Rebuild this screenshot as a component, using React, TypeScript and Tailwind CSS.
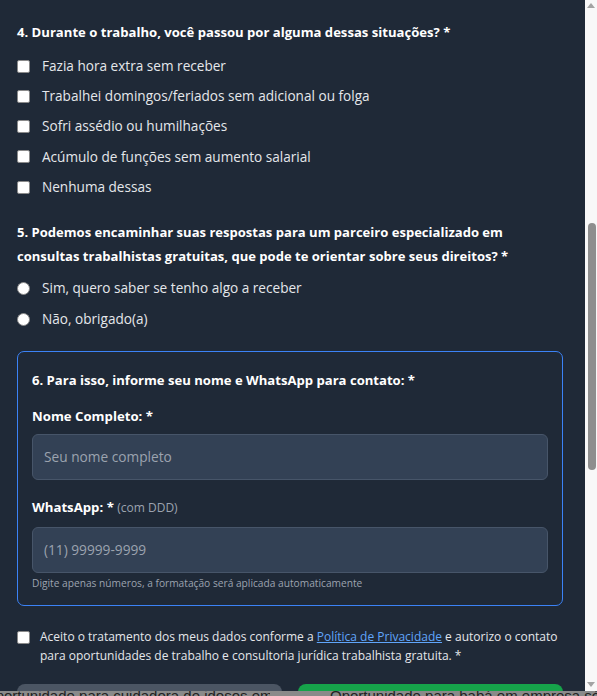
import React from "react";

const situacoes = [
  "Fazia hora extra sem receber",
  "Trabalhei domingos/feriados sem adicional ou folga",
  "Sofri assédio ou humilhações",
  "Acúmulo de funções sem aumento salarial",
  "Nenhuma dessas",
];

const respostas = ["Sim, quero saber se tenho algo a receber", "Não, obrigado(a)"];

function Checkbox() {
  return <span className="block w-[13px] h-[13px] shrink-0 rounded-[2px] bg-white border border-[#8a8a8a]" />;
}

function Radio() {
  return <span className="block w-[13px] h-[13px] shrink-0 rounded-full bg-white border border-[#8a8a8a]" />;
}

function Scrollbar() {
  return (
    <div className="w-[12px] shrink-0 bg-[#f8f8f8] flex flex-col items-center">
      <svg width="12" height="12" viewBox="0 0 12 12" className="shrink-0">
        <path d="M2 8 L6 3 L10 8 Z" fill="#a3a3a3" />
      </svg>
      <div className="h-[211px] shrink-0" />
      <div className="w-[8px] h-[247px] rounded-full bg-[#8e8e8e] shrink-0 ml-[1px]" />
      <div className="flex-1" />
      <svg width="12" height="12" viewBox="0 0 12 12" className="shrink-0 mb-[1px]">
        <path d="M2 4 L6 9 L10 4 Z" fill="#a3a3a3" />
      </svg>
    </div>
  );
}

export default function App() {
  return (
    <div className="w-[597px] h-[696px] overflow-hidden flex flex-col bg-[#1f2937] font-['Open_Sans',sans-serif]">
      <div className="flex h-[691px] shrink-0">
        <main className="flex-1 flex flex-col pl-[17px] pr-[22px] pt-[22px] text-white">
          {/* Pergunta 4 */}
          <h3 className="text-[13.1px] leading-[20px] font-bold">
            4. Durante o trabalho, você passou por alguma dessas situações? *
          </h3>
          <div className="mt-[14px] flex flex-col gap-[10.3px]">
            {situacoes.map((s) => (
              <label key={s} className="flex items-center gap-[12px] h-[20px] text-[13.6px] text-[#e5e7eb]">
                <Checkbox />
                {s}
              </label>
            ))}
          </div>

          {/* Pergunta 5 */}
          <h3 className="mt-[23px] text-[13.05px] leading-[24px] font-bold pr-[10px]">
            5. Podemos encaminhar suas respostas para um parceiro especializado em consultas trabalhistas gratuitas, que pode te orientar sobre seus direitos? *
          </h3>
          <div className="mt-[10px] flex flex-col gap-[11px]">
            {respostas.map((r) => (
              <label key={r} className="flex items-center gap-[12px] h-[20px] text-[13.6px] text-[#e5e7eb]">
                <Radio />
                {r}
              </label>
            ))}
          </div>

          {/* Pergunta 6 */}
          <div className="mt-[22px] border border-[#3b82f6] rounded-[7px] pt-[18px] pb-[15px] px-[14px]">
            <h3 className="text-[13.1px] leading-[20px] font-bold">
              6. Para isso, informe seu nome e WhatsApp para contato: *
            </h3>
            <label className="block mt-[16px] text-[13.2px] leading-[20px] font-bold">Nome Completo: *</label>
            <div className="mt-[8px] h-[46px] rounded-[6px] bg-[#334155] border border-[#475569] flex items-center px-[11px] text-[13.7px] text-[#9ca3af]">
              Seu nome completo
            </div>
            <label className="block mt-[17px] text-[13.2px] leading-[20px] font-bold">
              WhatsApp: * <span className="font-normal text-[12px] text-[#9ca3af]">(com DDD)</span>
            </label>
            <div className="mt-[9px] h-[46px] rounded-[6px] bg-[#334155] border border-[#475569] flex items-center px-[11px] text-[13.7px] text-[#9ca3af]">
              (11) 99999-9999
            </div>
            <p className="mt-[3px] text-[10.2px] leading-[14px] text-[#9ca3af]">
              Digite apenas números, a formatação será aplicada automaticamente
            </p>
          </div>

          {/* Consentimento */}
          <div className="mt-[21px] flex items-start gap-[10px]">
            <span className="mt-[4px]"><Checkbox /></span>
            <p className="text-[12px] leading-[19px] text-[#e5e7eb] -mr-[8px]">
              Aceito o tratamento dos meus dados conforme a{" "}
              <a className="text-[#60a5fa] underline">Política de Privacidade</a> e autorizo o contato para oportunidades de trabalho e consultoria jurídica trabalhista gratuita. *
            </p>
          </div>

          {/* Botões */}
          <div className="mt-[19px] grid grid-cols-2 gap-[16px]">
            <div className="h-[30px] rounded-t-[8px] bg-[#4b5563]" />
            <div className="h-[30px] rounded-t-[8px] bg-[#16a34a]" />
          </div>
        </main>
        <Scrollbar />
      </div>

      {/* faixa inferior */}
      <div className="h-[5px] shrink-0 overflow-hidden bg-[#8a8a8a] flex text-[#222] text-[15px] leading-[15px] font-['Liberation_Sans',sans-serif]">
        <div className="w-[270px] shrink-0 overflow-hidden whitespace-nowrap -mt-[3px]">
          <span className="block -ml-[16px]">Oportunidade para cuidadora de idosos em</span>
        </div>
        <div className="w-[1px] bg-[#555]" />
        <div className="flex-1 whitespace-nowrap -mt-[3px] pl-[60px]">
          Oportunidade para babá em empresa séria
        </div>
      </div>
    </div>
  );
}
